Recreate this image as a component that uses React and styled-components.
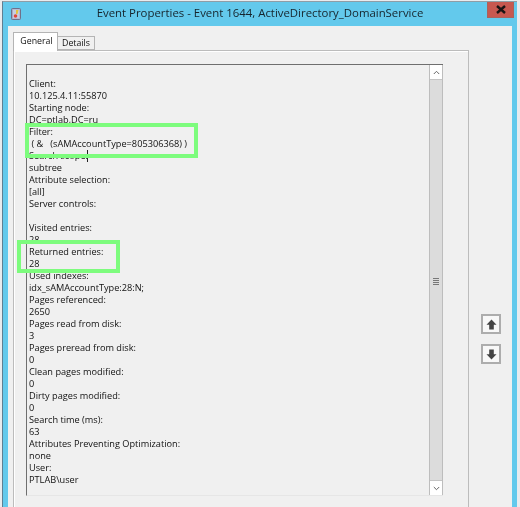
import React from "react";
import styled, { createGlobalStyle } from "styled-components";

const Global = createGlobalStyle`
  html, body { margin: 0; padding: 0; background: #eef0f2; }
  body { width: 520px; height: 507px; overflow: hidden; }
`;

const Page = styled.div`
  width: 520px;
  height: 507px;
  overflow: hidden;
  position: relative;
  display: flex;
  flex-direction: column;
  padding: 1px 3px 0 2px;
  box-sizing: border-box;
  background: #e9ebee;
  font-family: "Open Sans", "Noto Sans", sans-serif;
  color: #111;
  filter: blur(0.3px);
`;

const Win = styled.div`
  flex: 1;
  min-height: 0;
  display: flex;
  flex-direction: column;
  background: #63c9ec;
  border-top: 1px solid #8f9da6;
  border-left: 1px solid #5f7f92;
  padding: 0 5px 0 5px;
`;

const TitleBar = styled.div`
  height: 24px;
  flex: none;
  position: relative;
  display: flex;
  align-items: center;
  justify-content: center;
  font-size: 11.4px;
  color: #16242c;
  padding-bottom: 3px;
  box-sizing: border-box;
`;

const AppIcon = styled.svg`
  position: absolute;
  left: 3px;
  top: 6px;
  width: 10px;
  height: 12px;
`;

const Close = styled.div`
  position: absolute;
  right: -2px;
  top: 0;
  width: 27px;
  height: 16px;
  background: #c75850;
  border: 1px solid #a9625c;
  border-top: none;
  box-sizing: border-box;
  display: flex;
  align-items: center;
  justify-content: center;
`;

const Content = styled.div`
  flex: 1;
  min-height: 0;
  background: #f0f0f0;
  display: flex;
  padding: 6px 0 0 5px;
`;

const Left = styled.div`
  width: 456px;
  flex: none;
  display: flex;
  flex-direction: column;
`;

const Tabs = styled.div`
  display: flex;
  align-items: flex-end;
  height: 19px;
  flex: none;
  position: relative;
  z-index: 1;
  margin-bottom: -1px;
`;

const Tab = styled.div`
  font-size: 8.8px;
  box-sizing: border-box;
  display: flex;
  align-items: center;
  justify-content: center;
  border: 1px solid #b4b4b4;
  width: ${p => (p.$active ? "45px" : "37px")};
  height: ${p => (p.$active ? "19px" : "14px")};
  background: ${p => (p.$active ? "#ffffff" : "#f0f0f0")};
  border-bottom: ${p => (p.$active ? "none" : "1px solid #b4b4b4")};
  border-left: ${p => (p.$active ? "1px solid #b4b4b4" : "none")};
  margin-bottom: ${p => (p.$active ? "0" : "1px")};
  padding-bottom: ${p => (p.$active ? "3px" : "0")};
  padding-left: ${p => (p.$active ? "2px" : "0")};
`;

const Panel = styled.div`
  flex: 1;
  min-height: 0;
  border: 1px solid #bcbcbc;
  border-bottom: none;
  box-shadow: inset 1px 1px 0 #ffffff;
  padding: 13px 25px 11px 12px;
  display: flex;
`;

const TextBox = styled.div`
  flex: 1;
  display: flex;
  border-top: 1px solid #6f6f6f;
  border-left: 1px solid #6f6f6f;
  border-bottom: 1px solid #e6e6e6;
`;

const LogText = styled.div`
  flex: 1;
  padding: 13px 0 0 2px;
  font-size: 9.2px;
  line-height: 12px;
  white-space: pre;
`;

const Line = styled.div`
  height: 12px;
`;

const Scrollbar = styled.div`
  width: 14px;
  flex: none;
  display: flex;
  flex-direction: column;
  background: #dcdcdc;
  border-left: 1px solid #bdbdbd;
  border-right: 1px solid #bdbdbd;
  box-sizing: border-box;
`;

const ScrollButton = styled.div`
  height: 14px;
  flex: none;
  background: #ffffff;
  display: flex;
  align-items: center;
  justify-content: center;
  border-bottom: ${p => (p.$top ? "1px solid #c4c4c4" : "none")};
  border-top: ${p => (p.$top ? "none" : "1px solid #c4c4c4")};
`;

const Track = styled.div`
  flex: 1;
  display: flex;
  align-items: center;
  justify-content: center;
  padding-top: 3px;
`;

const Grip = styled.div`
  width: 6px;
  height: 7px;
  background: repeating-linear-gradient(#777 0 1px, #dcdcdc 1px 2px);
`;

const Side = styled.div`
  flex: 1;
  display: flex;
  flex-direction: column;
  gap: 10px;
  padding: 282px 0 0 12px;
`;

const MoveButton = styled.div`
  width: 20px;
  height: 20px;
  box-sizing: border-box;
  border: 2px solid #adadad;
  background: #f8f8f8;
  display: flex;
  align-items: center;
  justify-content: center;
`;

const Highlight = styled.div`
  position: absolute;
  left: ${p => p.$x}px;
  top: ${p => p.$y}px;
  width: ${p => p.$w}px;
  height: ${p => p.$h}px;
  box-sizing: border-box;
  border: 4px solid #7dfc7d;
  pointer-events: none;
`;

const Caret = styled.div`
  position: absolute;
  left: 87px;
  top: 150px;
  width: 1px;
  height: 12px;
  background: #222;
`;

const lines = [
  "Client:", "10.125.4.11:55870", "Starting node:", "DC=ptlab,DC=ru", "Filter:",
  " ( &   (sAMAccountType=805306368) )", "Search scope:", "subtree", "Attribute selection:", "[all]",
  "Server controls:", "", "Visited entries:", "28", "Returned entries:", "28",
  "Used indexes:", "idx_sAMAccountType:28:N;", "Pages referenced:", "2650",
  "Pages read from disk:", "3", "Pages preread from disk:", "0", "Clean pages modified:", "0",
  "Dirty pages modified:", "0", "Search time (ms):", "63",
  "Attributes Preventing Optimization:", "none", "User:", "PTLAB\\user",
];

export default function App() {
  return (
    <Page>
      <Global />
      <Win>
        <TitleBar>
          <AppIcon viewBox="0 0 10 12">
            <rect x="0.5" y="0.5" width="9" height="11" rx="1" fill="#a9a9c4" stroke="#70708a" />
            <rect x="2" y="1.5" width="6.5" height="9" fill="#c6cde0" />
            <path d="M5 2 H7.5 L6.5 6 H5 Z" fill="#e6c23a" />
            <circle cx="4.5" cy="8" r="1.8" fill="#e0453c" />
          </AppIcon>
          Event Properties - Event 1644, ActiveDirectory_DomainService
          <Close>
            <svg width="10" height="9" viewBox="0 0 10 9">
              <path d="M1 1 L9 8 M9 1 L1 8" stroke="#1a1414" strokeWidth="2.4" />
            </svg>
          </Close>
        </TitleBar>
        <Content>
          <Left>
            <Tabs>
              <Tab $active>General</Tab>
              <Tab>Details</Tab>
            </Tabs>
            <Panel>
              <TextBox>
                <LogText>
                  {lines.map((l, i) => (
                    <Line key={i}>{l}</Line>
                  ))}
                </LogText>
                <Scrollbar>
                  <ScrollButton $top>
                    <svg width="7" height="5" viewBox="0 0 7 5">
                      <path d="M0.8 4 L3.5 1.3 L6.2 4" fill="none" stroke="#666" strokeWidth="1" />
                    </svg>
                  </ScrollButton>
                  <Track>
                    <Grip />
                  </Track>
                  <ScrollButton>
                    <svg width="7" height="5" viewBox="0 0 7 5">
                      <path d="M0.8 1 L3.5 3.7 L6.2 1" fill="none" stroke="#666" strokeWidth="1" />
                    </svg>
                  </ScrollButton>
                </Scrollbar>
              </TextBox>
            </Panel>
          </Left>
          <Side>
            <MoveButton>
              <svg width="11" height="11" viewBox="0 0 11 11">
                <path d="M5.5 0.5 L10.5 5.8 H7.8 V10.5 H3.2 V5.8 H0.5 Z" fill="#444" />
              </svg>
            </MoveButton>
            <MoveButton>
              <svg width="11" height="11" viewBox="0 0 11 11">
                <path d="M5.5 10.5 L10.5 5.2 H7.8 V0.5 H3.2 V5.2 H0.5 Z" fill="#444" />
              </svg>
            </MoveButton>
          </Side>
        </Content>
      </Win>
      <Caret />
      <Highlight $x={25} $y={123} $w={173} $h={35} />
      <Highlight $x={17} $y={240} $w={103} $h={33} />
    </Page>
  );
}
